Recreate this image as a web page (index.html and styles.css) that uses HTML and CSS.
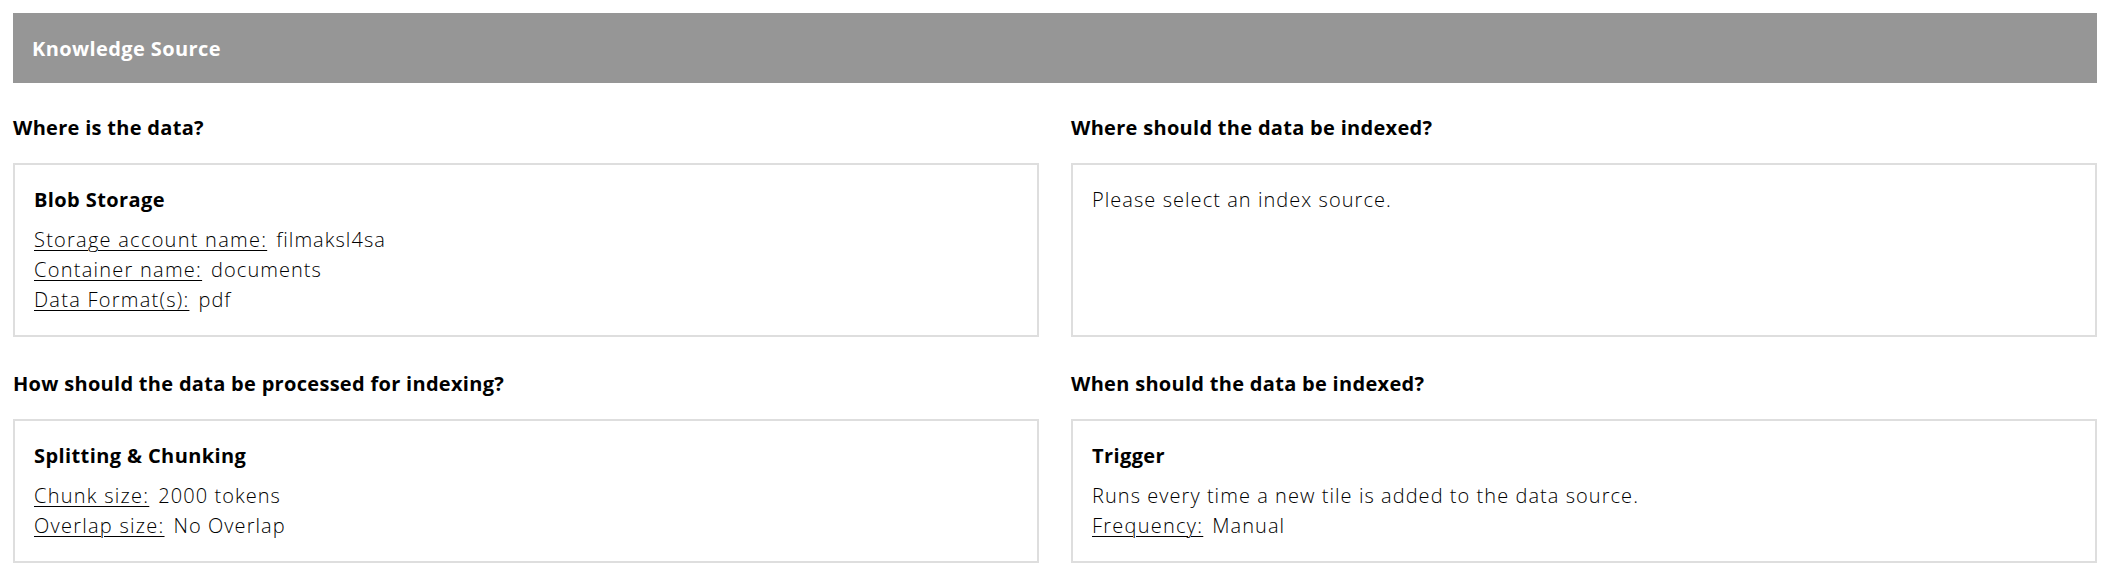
FILE: index.html
```html
<!DOCTYPE html>
<html lang="en">
<head>
<meta charset="utf-8">
<title>Knowledge Source</title>
<link rel="stylesheet" href="styles.css">
</head>
<body>
<div class="page">
  <div class="banner">Knowledge Source</div>
  <div class="grid">
    <section class="section">
      <h2 class="question">Where is the data?</h2>
      <div class="card">
        <div class="card-title">Blob Storage</div>
        <div class="row"><span class="label">Storage account name:</span><span class="value">filmaksl4sa</span></div>
        <div class="row"><span class="label">Container name:</span><span class="value">documents</span></div>
        <div class="row"><span class="label">Data Format(s):</span><span class="value">pdf</span></div>
      </div>
    </section>
    <section class="section">
      <h2 class="question">Where should the data be indexed?</h2>
      <div class="card">
        <div class="row plain">Please select an index source.</div>
      </div>
    </section>
    <section class="section">
      <h2 class="question">How should the data be processed for indexing?</h2>
      <div class="card">
        <div class="card-title">Splitting &amp; Chunking</div>
        <div class="row"><span class="label">Chunk size:</span><span class="value">2000 tokens</span></div>
        <div class="row"><span class="label">Overlap size:</span><span class="value">No Overlap</span></div>
      </div>
    </section>
    <section class="section">
      <h2 class="question">When should the data be indexed?</h2>
      <div class="card">
        <div class="card-title">Trigger</div>
        <div class="row">Runs every time a new tile is added to the data source.</div>
        <div class="row"><span class="label">Frequency:</span><span class="value">Manual</span></div>
      </div>
    </section>
  </div>
</div>
</body>
</html>
```
FILE: styles.css
```css
* { box-sizing: border-box; }
html, body { margin: 0; padding: 0; background: #ffffff; }
body {
  font-family: "Open Sans", "Liberation Sans", sans-serif;
  color: #111111;
}
.page {
  padding: 13px 12px 0 13px;
}
.banner {
  height: 70px;
  background: #969696;
  color: #ffffff;
  font-weight: 700;
  font-size: 20px;
  letter-spacing: 0.4px;
  display: flex;
  align-items: center;
  padding-left: 19px;
}
.grid {
  margin-top: 31px;
  display: grid;
  grid-template-columns: 1fr 1fr;
  column-gap: 32px;
  row-gap: 33px;
}
.section {
  display: flex;
  flex-direction: column;
}
.question {
  margin: 0 0 22px 0;
  font-size: 20px;
  line-height: 27px;
  font-weight: 700;
  letter-spacing: 0.3px;
  color: #000000;
}
.card {
  flex: 1;
  border: 2px solid #dedede;
  padding: 20px 19px;
}
.card-title {
  font-size: 20px;
  line-height: 30px;
  font-weight: 700;
  letter-spacing: 0.4px;
  margin-bottom: 10px;
  color: #000000;
}
.row {
  font-size: 20px;
  line-height: 30px;
  font-weight: 300;
  letter-spacing: 1.05px;
  color: #000000;
}
.label {
  letter-spacing: 1.25px;
  text-decoration: underline;
  text-decoration-thickness: 1px;
  text-underline-offset: 3px;
  margin-right: 9px;
}
```
